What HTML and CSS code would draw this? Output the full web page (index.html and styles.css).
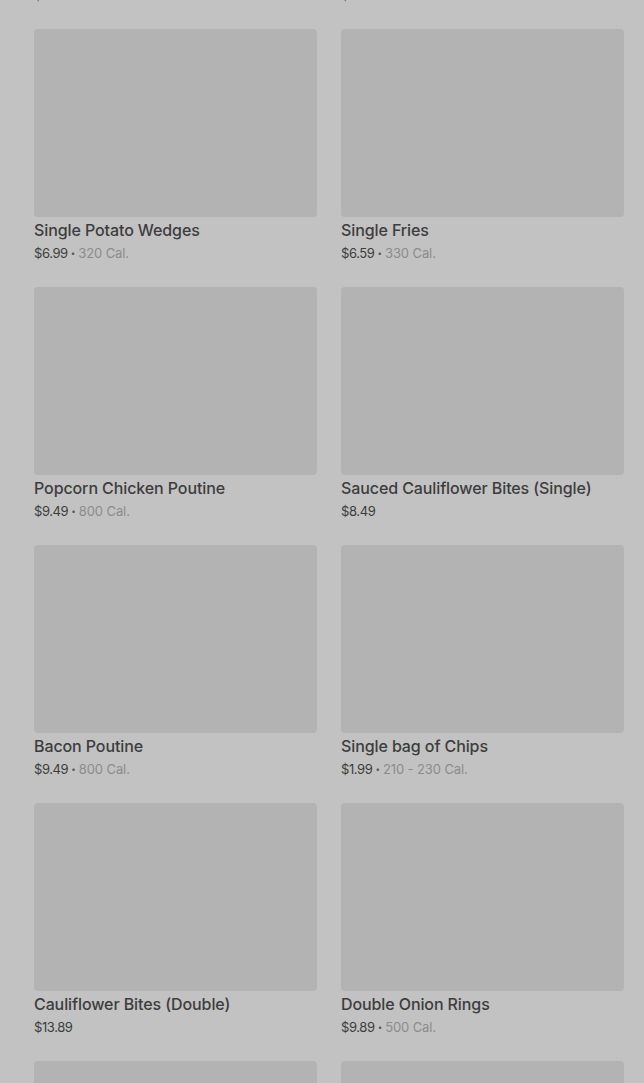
FILE: index.html
```html
<!DOCTYPE html>
<html>
<head>
<meta charset="utf-8">
<link rel="stylesheet" href="styles.css">
</head>
<body>
<div class="grid">
  <div class="card"><div class="img"></div><div class="title">Large Fries</div><div class="meta"><span class="price">$8.49</span><span class="dot">•</span><span class="cal">540 Cal.</span></div></div>
  <div class="card"><div class="img"></div><div class="title">Onion Rings</div><div class="meta"><span class="price">$7.29</span><span class="dot">•</span><span class="cal">250 Cal.</span></div></div>

  <div class="card"><div class="img"></div><div class="title">Single Potato Wedges</div><div class="meta"><span class="price">$6.99</span><span class="dot">•</span><span class="cal">320 Cal.</span></div></div>
  <div class="card"><div class="img"></div><div class="title">Single Fries</div><div class="meta"><span class="price">$6.59</span><span class="dot">•</span><span class="cal">330 Cal.</span></div></div>

  <div class="card"><div class="img"></div><div class="title">Popcorn Chicken Poutine</div><div class="meta"><span class="price">$9.49</span><span class="dot">•</span><span class="cal">800 Cal.</span></div></div>
  <div class="card"><div class="img"></div><div class="title">Sauced Cauliflower Bites (Single)</div><div class="meta"><span class="price">$8.49</span></div></div>

  <div class="card"><div class="img"></div><div class="title">Bacon Poutine</div><div class="meta"><span class="price">$9.49</span><span class="dot">•</span><span class="cal">800 Cal.</span></div></div>
  <div class="card"><div class="img"></div><div class="title">Single bag of Chips</div><div class="meta"><span class="price">$1.99</span><span class="dot">•</span><span class="cal">210 - 230 Cal.</span></div></div>

  <div class="card"><div class="img"></div><div class="title">Cauliflower Bites (Double)</div><div class="meta"><span class="price">$13.89</span></div></div>
  <div class="card"><div class="img"></div><div class="title">Double Onion Rings</div><div class="meta"><span class="price">$9.89</span><span class="dot">•</span><span class="cal">500 Cal.</span></div></div>

  <div class="card"><div class="img"></div><div class="title">Poutine</div><div class="meta"><span class="price">$8.99</span><span class="dot">•</span><span class="cal">720 Cal.</span></div></div>
  <div class="card"><div class="img"></div><div class="title">Side Salad</div><div class="meta"><span class="price">$5.49</span><span class="dot">•</span><span class="cal">120 Cal.</span></div></div>
</div>
</body>
</html>
```
FILE: styles.css
```css
html, body {
  margin: 0;
  padding: 0;
  background: #c2c2c2;
  overflow: hidden;
}
body {
  font-family: Inter, "Noto Sans", sans-serif;
  color: #3d3d3d;
}
.grid {
  display: grid;
  grid-template-columns: 283px 283px;
  column-gap: 24px;
  row-gap: 24px;
  padding: 0 20px 0 34px;
  margin-top: -229px;
}
.card {
  display: flex;
  flex-direction: column;
}
.img {
  height: 188px;
  background: #b3b3b3;
  border-radius: 4px;
  margin-bottom: 3px;
}
.title {
  font-size: 16px;
  font-weight: 500;
  line-height: 20px;
  letter-spacing: -0.1px;
  white-space: nowrap;
}
.meta {
  font-size: 13px;
  line-height: 20px;
  padding-top: 3px;
  color: #8c8c8c;
  white-space: nowrap;
}
.price {
  color: #3d3d3d;
  letter-spacing: -0.4px;
}
.dot {
  font-size: 8px;
  margin: 0 3px;
  vertical-align: 2px;
  color: #5a5a5a;
}
.cal {
  color: #8c8c8c;
  letter-spacing: -0.1px;
}
```
